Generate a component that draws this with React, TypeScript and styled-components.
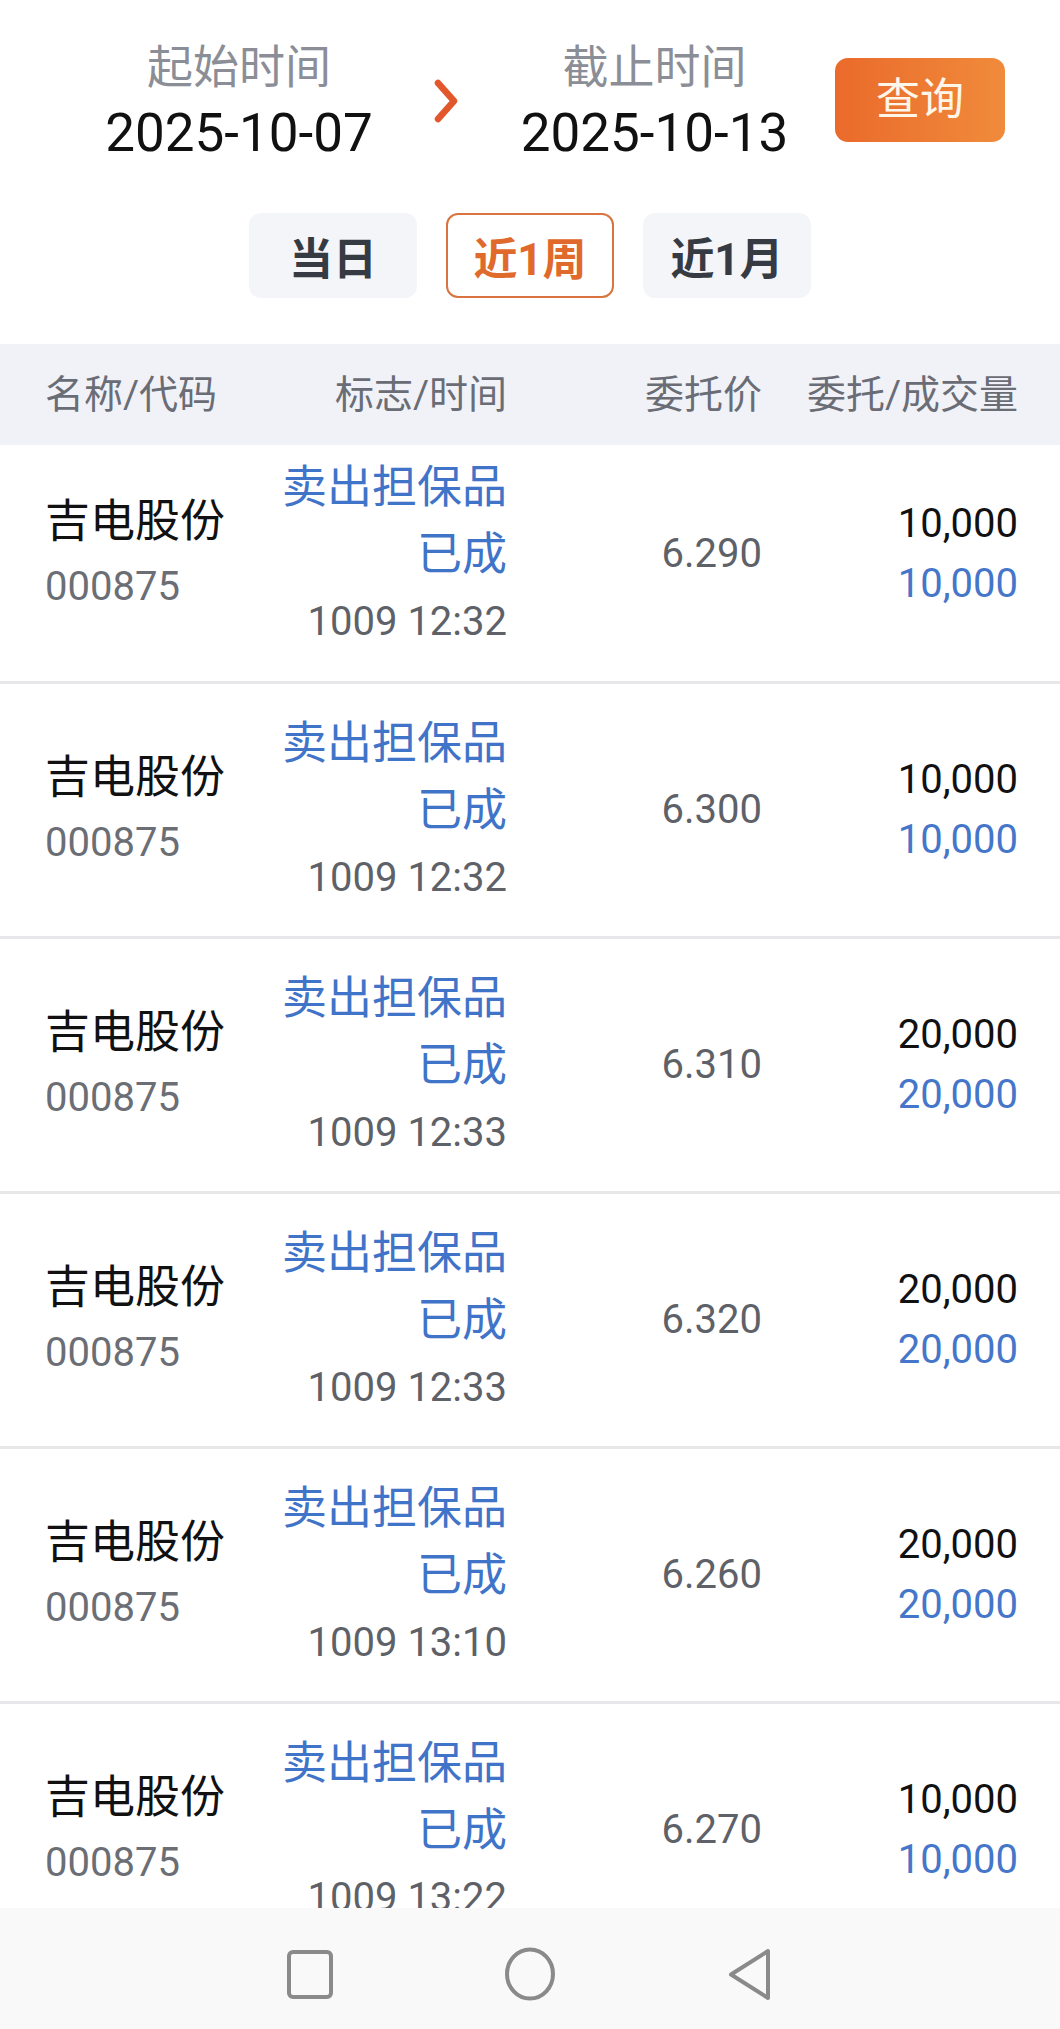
import React from "react";
import styled, { createGlobalStyle } from "styled-components";

const GlobalStyle = createGlobalStyle`
  html, body {
    margin: 0;
    padding: 0;
    background: #ffffff;
  }
  body {
    font-family: Roboto, "Noto Sans CJK SC", "Noto Sans", sans-serif;
    color: #111;
  }
  * { box-sizing: border-box; }
`;

const Page = styled.div`
  display: flex;
  flex-direction: column;
  height: 100vh;
  overflow: hidden;
  background: #fff;
`;

const DateBar = styled.div`
  display: grid;
  grid-template-columns: 358px 56px 361px 170px;
  align-items: center;
  padding: 34px 0 0 60px;
`;

const DateCol = styled.div`
  display: flex;
  flex-direction: column;
  align-items: center;
`;

const DateLabel = styled.div`
  font-size: 46px;
  line-height: 66px;
  color: #8b8e96;
`;

const DateValue = styled.div`
  font-size: 53px;
  line-height: 66px;
  color: #111;
`;

const ChevronWrap = styled.div`
  display: flex;
  justify-content: center;
  align-items: center;
  padding-top: 2px;
`;

const QueryButton = styled.button`
  width: 170px;
  height: 84px;
  border: none;
  border-radius: 13px;
  background: linear-gradient(90deg, #ea6a2b 0%, #f08b3b 100%);
  color: #fff6ea;
  font-family: inherit;
  font-size: 44px;
  line-height: 84px;
  padding: 0;
  justify-self: end;
`;

const RangeBar = styled.div`
  display: flex;
  justify-content: center;
  gap: 29px;
  margin-top: 47px;
`;

const RangeButton = styled.div<{ $active?: boolean }>`
  width: 168px;
  height: 85px;
  border-radius: 12px;
  display: flex;
  align-items: center;
  justify-content: center;
  font-size: 44px;
  font-weight: 700;
  background: ${(p) => (p.$active ? "#ffffff" : "#f4f5f9")};
  color: ${(p) => (p.$active ? "#e0692c" : "#363a42")};
  border: 2.5px solid ${(p) => (p.$active ? "#d9733f" : "transparent")};
`;

const Grid = styled.div`
  display: grid;
  grid-template-columns: 240px 222px 255px 256px;
  padding: 0 42px 0 45px;
  align-items: center;
`;

const TableHead = styled(Grid)`
  margin-top: 46px;
  height: 101px;
  background: #f1f2f7;
  color: #6a6d75;
  font-size: 39px;
  flex-shrink: 0;
`;

const HeadCell = styled.div<{ $align?: "left" | "right" }>`
  text-align: ${(p) => p.$align || "right"};
  line-height: 50px;
  white-space: nowrap;
`;

const List = styled.div`
  flex: 1;
  overflow: hidden;
`;

const Row = styled(Grid)`
  height: 255px;
  border-bottom: 3px solid #e7e7e9;
  &:first-child {
    height: 239px;
    padding-bottom: 18px;
  }
`;

const Cell = styled.div<{ $lh: number; $align?: "left" | "right" }>`
  display: flex;
  flex-direction: column;
  align-items: ${(p) => (p.$align === "left" ? "flex-start" : "flex-end")};
  line-height: ${(p) => p.$lh}px;
  white-space: nowrap;
`;

const Name = styled.span`
  font-size: 45px;
  color: #111;
`;

const Code = styled.span`
  font-size: 40px;
  color: #6b6e75;
`;

const Tag = styled.span`
  font-size: 45px;
  color: #3f74c8;
`;

const Num = styled.span<{ $tone: "dark" | "gray" | "blue" }>`
  font-size: 40px;
  color: ${(p) =>
    p.$tone === "dark" ? "#111111" : p.$tone === "blue" ? "#4576c9" : "#5e6168"};
`;

const NavBar = styled.div`
  height: 121px;
  flex-shrink: 0;
  background: #f9f9f9;
  display: flex;
  justify-content: center;
  align-items: center;
  padding-top: 11px;
`;

const NavItem = styled.div`
  width: 220px;
  display: flex;
  justify-content: center;
  align-items: center;
`;

const rows = [
  { price: "6.290", qty: "10,000", time: "1009 12:32" },
  { price: "6.300", qty: "10,000", time: "1009 12:32" },
  { price: "6.310", qty: "20,000", time: "1009 12:33" },
  { price: "6.320", qty: "20,000", time: "1009 12:33" },
  { price: "6.260", qty: "20,000", time: "1009 13:10" },
  { price: "6.270", qty: "10,000", time: "1009 13:22" },
];

export default function App() {
  return (
    <Page>
      <GlobalStyle />
      <DateBar>
        <DateCol>
          <DateLabel>起始时间</DateLabel>
          <DateValue>2025-10-07</DateValue>
        </DateCol>
        <ChevronWrap>
          <svg width="26" height="46" viewBox="0 0 26 46">
            <polyline
              points="5,5 21,23 5,41"
              fill="none"
              stroke="#e2582c"
              strokeWidth="6.5"
              strokeLinecap="round"
              strokeLinejoin="round"
            />
          </svg>
        </ChevronWrap>
        <DateCol>
          <DateLabel>截止时间</DateLabel>
          <DateValue>2025-10-13</DateValue>
        </DateCol>
        <QueryButton>查询</QueryButton>
      </DateBar>

      <RangeBar>
        <RangeButton>当日</RangeButton>
        <RangeButton $active>近1周</RangeButton>
        <RangeButton>近1月</RangeButton>
      </RangeBar>

      <TableHead>
        <HeadCell $align="left">名称/代码</HeadCell>
        <HeadCell>标志/时间</HeadCell>
        <HeadCell>委托价</HeadCell>
        <HeadCell>委托/成交量</HeadCell>
      </TableHead>

      <List>
        {rows.map((r, i) => (
          <Row key={i}>
            <Cell $lh={65} $align="left">
              <Name>吉电股份</Name>
              <Code>000875</Code>
            </Cell>
            <Cell $lh={67}>
              <Tag>卖出担保品</Tag>
              <Tag>已成</Tag>
              <Num $tone="gray">{r.time}</Num>
            </Cell>
            <Cell $lh={60}>
              <Num $tone="gray">{r.price}</Num>
            </Cell>
            <Cell $lh={60}>
              <Num $tone="dark">{r.qty}</Num>
              <Num $tone="blue">{r.qty}</Num>
            </Cell>
          </Row>
        ))}
      </List>

      <NavBar>
        <NavItem>
          <svg width="46" height="49" viewBox="0 0 46 49">
            <rect x="2" y="2" width="42" height="45" rx="4" fill="none" stroke="#8a8a8a" strokeWidth="4" />
          </svg>
        </NavItem>
        <NavItem>
          <svg width="52" height="54" viewBox="0 0 52 54">
            <ellipse cx="26" cy="27" rx="23" ry="24.5" fill="none" stroke="#8a8a8a" strokeWidth="4" />
          </svg>
        </NavItem>
        <NavItem>
          <svg width="46" height="55" viewBox="0 0 46 55">
            <path
              d="M41 4 L41 51 L4 27.5 Z"
              fill="none"
              stroke="#8a8a8a"
              strokeWidth="4"
              strokeLinejoin="round"
            />
          </svg>
        </NavItem>
      </NavBar>
    </Page>
  );
}
